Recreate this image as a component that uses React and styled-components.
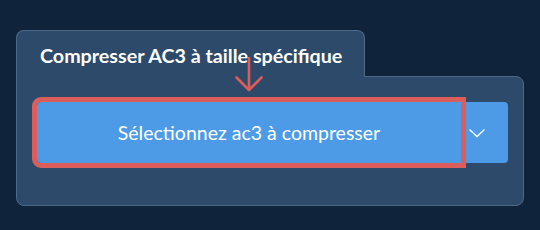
import React from "react";
import styled, { createGlobalStyle } from "styled-components";

const Global = createGlobalStyle`
  html, body { margin: 0; padding: 0; background: #0f233a; }
  body { font-family: Lato, "Noto Sans", sans-serif; }
`;

const Page = styled.div`
  width: 540px;
  height: 230px;
  box-sizing: border-box;
  padding: 30px 16px 0 16px;
`;

const Card = styled.div`
  position: relative;
  width: 508px;
`;

const Tab = styled.div`
  position: relative;
  z-index: 1;
  display: flex;
  width: 349px;
  align-items: center;
  box-sizing: border-box;
  height: 47px;
  padding: 3px 0 0 23px;
  margin-bottom: -1px;
  background: #2d4a6a;
  border: 1px solid #4e6988;
  border-bottom: none;
  border-radius: 8px 8px 0 0;
  color: #ffffff;
  font-size: 19.7px;
  font-weight: 700;
  white-space: nowrap;
`;

const Panel = styled.div`
  box-sizing: border-box;
  height: 130px;
  padding: 25px 15px 0 20px;
  background: #2d4a6a;
  border: 1px solid #4e6988;
  border-radius: 0 8px 8px 8px;
`;

const Group = styled.div`
  display: flex;
  height: 61px;
`;

const MainButton = styled.button`
  position: relative;
  flex: 1;
  border: none;
  margin: 0;
  padding: 0;
  background: #4d9be6;
  color: #ffffff;
  font-family: Lato, "Noto Sans", sans-serif;
  font-size: 19.5px;
  font-weight: 400;
  border-radius: 4px 0 0 4px;
  outline: ${(p) => (p.$highlight ? "5px solid #dc5e5b" : "none")};
  z-index: 1;
`;

const Toggle = styled.button`
  width: 47px;
  border: none;
  margin: 0;
  padding: 0 15px 0 0;
  background: #4d9be6;
  border-radius: 0 4px 4px 0;
  display: flex;
  align-items: center;
  justify-content: center;
`;

const Arrow = styled.svg`
  position: absolute;
  left: 219px;
  top: 27px;
  z-index: 2;
`;

export default function App() {
  return (
    <>
      <Global />
      <Page>
        <Card>
          <Tab>Compresser AC3 à taille spécifique</Tab>
          <Panel>
            <Group>
              <MainButton $highlight>Sélectionnez ac3 à compresser</MainButton>
              <Toggle aria-label="Ouvrir">
                <svg width="18" height="10" viewBox="0 0 18 10">
                  <path d="M1.5 1.5 L9 8.5 L16.5 1.5" fill="none" stroke="#ffffff" strokeWidth="1.3" />
                </svg>
              </Toggle>
            </Group>
          </Panel>
          <Arrow width="28" height="36" viewBox="0 0 28 36">
            <path d="M14 1 V33 M1.5 20.5 L14 33 L26.5 20.5" fill="none" stroke="#dc5e5b" strokeWidth="2.6" strokeLinecap="round" strokeLinejoin="round" />
          </Arrow>
        </Card>
      </Page>
    </>
  );
}
